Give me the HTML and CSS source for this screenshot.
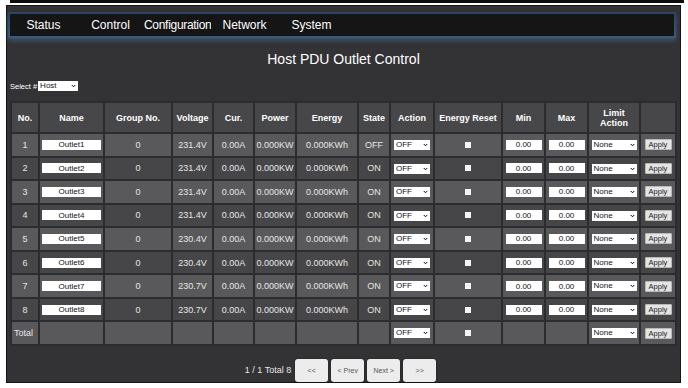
FILE: index.html
```html
<!DOCTYPE html>
<html>
<head>
<meta charset="utf-8">
<title>Host PDU Outlet Control</title>
<link rel="stylesheet" href="styles.css">
</head>
<body>
<div class="topband"></div>
<div class="panel">
  <nav class="nav">
    <div class="nav-inner">
      <a class="nav-item">Status</a>
      <a class="nav-item">Control</a>
      <a class="nav-item nav-wide">Configuration</a>
      <a class="nav-item">Network</a>
      <a class="nav-item">System</a>
    </div>
  </nav>
  <h1 class="title">Host PDU Outlet Control</h1>
  <div class="select-row">
    <span class="select-label">Select #</span>
    <span class="sel sel-host"><select><option>Host</option></select><svg class="chev" viewBox="0 0 10 6"><path d="M1.5 1l3.5 3.5L8.5 1" fill="none" stroke="#000" stroke-width="2"/></svg></span>
  </div>
  <table class="grid">
    <colgroup>
      <col style="width:28px"><col style="width:65px"><col style="width:68px"><col style="width:41px"><col style="width:41px"><col style="width:42px"><col style="width:62px"><col style="width:32px"><col style="width:44px"><col style="width:68px"><col style="width:43px"><col style="width:43px"><col style="width:52px"><col style="width:36px">
    </colgroup>
    <thead>
      <tr><th>No.</th><th>Name</th><th>Group No.</th><th>Voltage</th><th>Cur.</th><th>Power</th><th>Energy</th><th>State</th><th>Action</th><th>Energy Reset</th><th>Min</th><th>Max</th><th>Limit<br>Action</th><th></th></tr>
    </thead>
    <tbody>
      <tr><td>1</td><td><input class="name-in" value="Outlet1"></td><td>0</td><td>231.4V</td><td>0.00A</td><td>0.000KW</td><td>0.000KWh</td><td>OFF</td><td><span class="sel sel-act"><select><option>OFF</option></select><svg class="chev" viewBox="0 0 10 6"><path d="M1.5 1l3.5 3.5L8.5 1" fill="none" stroke="#000" stroke-width="2"/></svg></span></td><td><input type="checkbox" class="chk"></td><td><input class="num-in" value="0.00"></td><td><input class="num-in" value="0.00"></td><td><span class="sel sel-lim"><select><option>None</option></select><svg class="chev" viewBox="0 0 10 6"><path d="M1.5 1l3.5 3.5L8.5 1" fill="none" stroke="#000" stroke-width="2"/></svg></span></td><td><button class="apply">Apply</button></td></tr>
      <tr><td>2</td><td><input class="name-in" value="Outlet2"></td><td>0</td><td>231.4V</td><td>0.00A</td><td>0.000KW</td><td>0.000KWh</td><td>ON</td><td><span class="sel sel-act"><select><option>OFF</option></select><svg class="chev" viewBox="0 0 10 6"><path d="M1.5 1l3.5 3.5L8.5 1" fill="none" stroke="#000" stroke-width="2"/></svg></span></td><td><input type="checkbox" class="chk"></td><td><input class="num-in" value="0.00"></td><td><input class="num-in" value="0.00"></td><td><span class="sel sel-lim"><select><option>None</option></select><svg class="chev" viewBox="0 0 10 6"><path d="M1.5 1l3.5 3.5L8.5 1" fill="none" stroke="#000" stroke-width="2"/></svg></span></td><td><button class="apply">Apply</button></td></tr>
      <tr><td>3</td><td><input class="name-in" value="Outlet3"></td><td>0</td><td>231.4V</td><td>0.00A</td><td>0.000KW</td><td>0.000KWh</td><td>ON</td><td><span class="sel sel-act"><select><option>OFF</option></select><svg class="chev" viewBox="0 0 10 6"><path d="M1.5 1l3.5 3.5L8.5 1" fill="none" stroke="#000" stroke-width="2"/></svg></span></td><td><input type="checkbox" class="chk"></td><td><input class="num-in" value="0.00"></td><td><input class="num-in" value="0.00"></td><td><span class="sel sel-lim"><select><option>None</option></select><svg class="chev" viewBox="0 0 10 6"><path d="M1.5 1l3.5 3.5L8.5 1" fill="none" stroke="#000" stroke-width="2"/></svg></span></td><td><button class="apply">Apply</button></td></tr>
      <tr><td>4</td><td><input class="name-in" value="Outlet4"></td><td>0</td><td>231.4V</td><td>0.00A</td><td>0.000KW</td><td>0.000KWh</td><td>ON</td><td><span class="sel sel-act"><select><option>OFF</option></select><svg class="chev" viewBox="0 0 10 6"><path d="M1.5 1l3.5 3.5L8.5 1" fill="none" stroke="#000" stroke-width="2"/></svg></span></td><td><input type="checkbox" class="chk"></td><td><input class="num-in" value="0.00"></td><td><input class="num-in" value="0.00"></td><td><span class="sel sel-lim"><select><option>None</option></select><svg class="chev" viewBox="0 0 10 6"><path d="M1.5 1l3.5 3.5L8.5 1" fill="none" stroke="#000" stroke-width="2"/></svg></span></td><td><button class="apply">Apply</button></td></tr>
      <tr><td>5</td><td><input class="name-in" value="Outlet5"></td><td>0</td><td>230.4V</td><td>0.00A</td><td>0.000KW</td><td>0.000KWh</td><td>ON</td><td><span class="sel sel-act"><select><option>OFF</option></select><svg class="chev" viewBox="0 0 10 6"><path d="M1.5 1l3.5 3.5L8.5 1" fill="none" stroke="#000" stroke-width="2"/></svg></span></td><td><input type="checkbox" class="chk"></td><td><input class="num-in" value="0.00"></td><td><input class="num-in" value="0.00"></td><td><span class="sel sel-lim"><select><option>None</option></select><svg class="chev" viewBox="0 0 10 6"><path d="M1.5 1l3.5 3.5L8.5 1" fill="none" stroke="#000" stroke-width="2"/></svg></span></td><td><button class="apply">Apply</button></td></tr>
      <tr><td>6</td><td><input class="name-in" value="Outlet6"></td><td>0</td><td>230.4V</td><td>0.00A</td><td>0.000KW</td><td>0.000KWh</td><td>ON</td><td><span class="sel sel-act"><select><option>OFF</option></select><svg class="chev" viewBox="0 0 10 6"><path d="M1.5 1l3.5 3.5L8.5 1" fill="none" stroke="#000" stroke-width="2"/></svg></span></td><td><input type="checkbox" class="chk"></td><td><input class="num-in" value="0.00"></td><td><input class="num-in" value="0.00"></td><td><span class="sel sel-lim"><select><option>None</option></select><svg class="chev" viewBox="0 0 10 6"><path d="M1.5 1l3.5 3.5L8.5 1" fill="none" stroke="#000" stroke-width="2"/></svg></span></td><td><button class="apply">Apply</button></td></tr>
      <tr><td>7</td><td><input class="name-in" value="Outlet7"></td><td>0</td><td>230.7V</td><td>0.00A</td><td>0.000KW</td><td>0.000KWh</td><td>ON</td><td><span class="sel sel-act"><select><option>OFF</option></select><svg class="chev" viewBox="0 0 10 6"><path d="M1.5 1l3.5 3.5L8.5 1" fill="none" stroke="#000" stroke-width="2"/></svg></span></td><td><input type="checkbox" class="chk"></td><td><input class="num-in" value="0.00"></td><td><input class="num-in" value="0.00"></td><td><span class="sel sel-lim"><select><option>None</option></select><svg class="chev" viewBox="0 0 10 6"><path d="M1.5 1l3.5 3.5L8.5 1" fill="none" stroke="#000" stroke-width="2"/></svg></span></td><td><button class="apply">Apply</button></td></tr>
      <tr><td>8</td><td><input class="name-in" value="Outlet8"></td><td>0</td><td>230.7V</td><td>0.00A</td><td>0.000KW</td><td>0.000KWh</td><td>ON</td><td><span class="sel sel-act"><select><option>OFF</option></select><svg class="chev" viewBox="0 0 10 6"><path d="M1.5 1l3.5 3.5L8.5 1" fill="none" stroke="#000" stroke-width="2"/></svg></span></td><td><input type="checkbox" class="chk"></td><td><input class="num-in" value="0.00"></td><td><input class="num-in" value="0.00"></td><td><span class="sel sel-lim"><select><option>None</option></select><svg class="chev" viewBox="0 0 10 6"><path d="M1.5 1l3.5 3.5L8.5 1" fill="none" stroke="#000" stroke-width="2"/></svg></span></td><td><button class="apply">Apply</button></td></tr>
      <tr class="total"><td class="total-label">Total</td><td></td><td></td><td></td><td></td><td></td><td></td><td></td><td><span class="sel sel-act"><select><option>OFF</option></select><svg class="chev" viewBox="0 0 10 6"><path d="M1.5 1l3.5 3.5L8.5 1" fill="none" stroke="#000" stroke-width="2"/></svg></span></td><td><input type="checkbox" class="chk"></td><td></td><td></td><td><span class="sel sel-lim"><select><option>None</option></select><svg class="chev" viewBox="0 0 10 6"><path d="M1.5 1l3.5 3.5L8.5 1" fill="none" stroke="#000" stroke-width="2"/></svg></span></td><td><button class="apply">Apply</button></td></tr>
    </tbody>
  </table>
  <div class="pager">
    <span class="pager-info">1 / 1 Total 8</span>
    <button class="pg">&lt;&lt;</button>
    <button class="pg">&lt; Prev</button>
    <button class="pg">Next &gt;</button>
    <button class="pg">&gt;&gt;</button>
  </div>
</div>
</body>
</html>
```

FILE: styles.css
```css
* { box-sizing: border-box; }

body {
  margin: 0;
  background: #ffffff;
  font-family: "Liberation Sans", Arial, sans-serif;
}

.topband {
  height: 3px;
  margin: 0 4px 2px 10px;
  background: #0d0d0d;
}

.panel {
  width: 675px;
  height: 378px;
  margin-left: 6px;
  background: #333336;
  border: 1px solid #141414;
  padding-top: 6px;
}

/* nav */
.nav {
  width: 668px;
  margin-left: 1px;
  padding: 2px;
  background: linear-gradient(#2a4462, #3b5a7c);
  box-shadow: 0 3px 4px rgba(70, 105, 140, 0.55);
}

.nav-inner {
  display: flex;
  height: 22px;
  background: #151515;
}

.nav-item {
  flex: none;
  width: 67px;
  padding: 0 2px;
  overflow: hidden;
  white-space: nowrap;
  text-align: center;
  color: #ffffff;
  font-size: 12px;
  line-height: 22px;
}

.nav-wide {
  padding: 0;
  letter-spacing: -0.3px;
}

/* title */
.title {
  margin: 12px 0 0;
  font-size: 14px;
  font-weight: normal;
  line-height: 18px;
  text-align: center;
  color: #ffffff;
}

/* select row */
.select-row {
  display: flex;
  align-items: center;
  height: 10px;
  margin-top: 13px;
  padding-left: 3px;
  color: #ffffff;
  font-size: 7.5px;
}

.select-label { margin-right: 1px; }

/* custom-looking selects */
.sel {
  position: relative;
  display: inline-block;
  height: 10px;
  vertical-align: middle;
}

.sel select {
  -webkit-appearance: none;
  appearance: none;
  display: block;
  width: 100%;
  height: 10px;
  margin: 0;
  padding: 0 0 0 2px;
  border: 0;
  border-radius: 0;
  background: #ffffff;
  color: #111;
  font-family: "Liberation Sans", Arial, sans-serif;
  font-size: 8px;
  line-height: 10px;
}

.sel .chev {
  position: absolute;
  right: 2px;
  top: 3px;
  width: 5px;
  height: 4px;
  pointer-events: none;
}

.sel-host { width: 40px; }
.sel-act { width: 36px; }
.sel-lim { width: 45px; }

/* table */
.grid {
  width: 665px;
  margin: 10px 0 0 3px;
  border-collapse: collapse;
  table-layout: fixed;
}

.grid th,
.grid td {
  border: 2px solid #2c2c2e;
  padding: 0;
  text-align: center;
  vertical-align: middle;
  overflow: hidden;
  white-space: nowrap;
}

.grid th {
  height: 31px;
  background: #474749;
  color: #ffffff;
  font-size: 9px;
  font-weight: bold;
  line-height: 10px;
  white-space: normal;
}

.grid td {
  height: 23.55px;
  color: #e6e6e6;
  font-size: 9px;
  line-height: 10px;
}

.grid tbody tr:nth-child(odd) td { background: #59595b; }
.grid tbody tr:nth-child(even) td { background: #464648; }

.grid td.total-label {
  text-align: left;
  padding-left: 2px;
}

.name-in {
  display: block;
  width: 59px;
  height: 10px;
  margin: 0 auto;
  padding: 0;
  border: 0;
  background: #ffffff;
  color: #111;
  font-family: "Liberation Sans", Arial, sans-serif;
  font-size: 8px;
  text-align: center;
}

.num-in {
  display: block;
  width: 36px;
  height: 10px;
  margin: 0 auto;
  padding: 0;
  border: 0;
  background: #ffffff;
  color: #111;
  font-family: "Liberation Sans", Arial, sans-serif;
  font-size: 8px;
  text-align: center;
}

.chk {
  -webkit-appearance: none;
  appearance: none;
  display: block;
  width: 6px;
  height: 6px;
  margin: 0 auto;
  border: 0;
  background: #f4f4f4;
}

.apply {
  display: block;
  width: 27px;
  height: 11px;
  margin: 0 auto;
  padding: 0;
  border: 1px solid #b8b8b8;
  border-radius: 1px;
  background: #e4e4e4;
  color: #222;
  font-family: "Liberation Sans", Arial, sans-serif;
  font-size: 7.5px;
  line-height: 9px;
}

/* pager */
.pager {
  display: flex;
  align-items: center;
  justify-content: center;
  gap: 3px;
  margin-top: 13px;
  padding-right: 6px;
}

.pager-info {
  margin-right: 1px;
  color: #e6e6e6;
  font-size: 9px;
}

.pg {
  width: 33px;
  height: 23px;
  padding: 0;
  border: 0;
  border-radius: 3px;
  background: #ececec;
  box-shadow: 0 0 2px rgba(0, 0, 0, 0.5);
  color: #555;
  font-family: "Liberation Sans", Arial, sans-serif;
  font-size: 7px;
}
```
